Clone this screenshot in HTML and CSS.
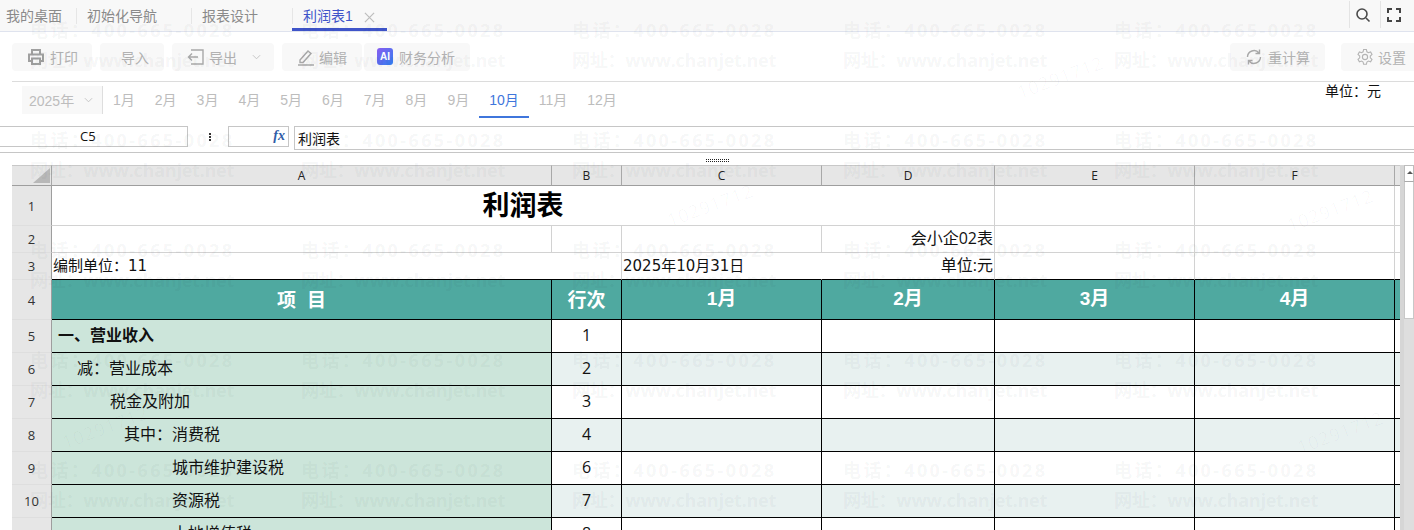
FILE: index.html
```html
<!DOCTYPE html>
<html lang="zh-CN">
<head>
<meta charset="utf-8">
<title>利润表</title>
<link rel="stylesheet" href="styles.css">
</head>
<body>
<div class="page">
  <header class="tabs">
    <span class="tab tab-home">我的桌面</span>
    <span class="tab tab-init">初始化导航</span>
    <span class="tab tab-design">报表设计</span>
    <span class="tab tab-active">利润表1<svg class="tab-x" viewBox="0 0 12 12"><path d="M1 1l10 10M11 1L1 11"/></svg></span>
    <div class="tab-tools">
      <span class="tool"><svg class="ic-top" viewBox="0 0 16 16"><circle cx="7" cy="7" r="5"/><path d="M11 11l3.500 3.500"/></svg></span>
      <span class="tool"><svg class="ic-top ic-full" viewBox="0 0 16 16"><path d="M6 2H2v4M10 2h4v4M6 14H2v-4M10 14h4v-4"/></svg></span>
    </div>
  </header>

  <div class="toolbar">
    <span class="btn btn-print"><svg class="ic ic-bold" viewBox="0 0 18 18"><path d="M5 6V2h8v4M5 13H2V6.500h14V13h-3M5 10.500h8V16H5z"/></svg>打印</span>
    <span class="btn btn-import">导入</span>
    <span class="btn btn-export"><svg class="ic" viewBox="0 0 18 18"><path d="M4 2h12v14H4M11 9H2M5 5.500L1.500 9 5 12.500"/></svg>导出<svg class="chev" viewBox="0 0 10 6"><path d="M1 1l4 4 4-4"/></svg></span>
    <span class="btn btn-edit"><svg class="ic" viewBox="0 0 18 18"><path d="M3 12L11 3l3 2.500-8 9H3zM1 17h16"/></svg>编辑</span>
    <span class="btn btn-ai"><span class="ai-badge">AI</span>财务分析</span>
    <span class="btn btn-recalc"><svg class="ic" viewBox="0 0 18 18"><path d="M2.500 9A6.500 6.500 0 0 1 14 5M15.500 9A6.500 6.500 0 0 1 4 13M14.500 1.500V5.500h-4M3.500 16.500V12.500h4"/></svg>重计算</span>
    <span class="btn btn-set"><svg class="ic ic-thin" viewBox="0 0 18 18"><circle cx="9" cy="9" r="2.600"/><path d="M7.600 1.500h2.800l.5 2.300 1.500.9 2.200-.7 1.400 2.400-1.700 1.600v1.800l1.700 1.600-1.400 2.400-2.200-.7-1.500.9-.5 2.300H7.600l-.5-2.300-1.500-.9-2.200.7-1.400-2.400 1.700-1.600V8L2 6.400l1.400-2.400 2.200.7 1.500-.9z"/></svg>设置</span>
  </div>

  <div class="months">
    <span class="year">2025年<svg class="chev" viewBox="0 0 10 6"><path d="M1 1l4 4 4-4"/></svg></span>
    <span class="month">1月</span>
    <span class="month">2月</span>
    <span class="month">3月</span>
    <span class="month">4月</span>
    <span class="month">5月</span>
    <span class="month">6月</span>
    <span class="month">7月</span>
    <span class="month">8月</span>
    <span class="month">9月</span>
    <span class="month month-on">10月</span>
    <span class="month">11月</span>
    <span class="month">12月</span>
    <span class="unit">单位：元</span>
  </div>

  <div class="formula">
    <span class="namebox">C5</span>
    <span class="kebab"><i></i><i></i><i></i></span>
    <span class="fxbox"><i class="fx">fx</i></span>
    <span class="finput">利润表</span>
  </div>

  <div class="splitter"><span class="dots"></span></div>

  <div class="sheet">
    <div class="grid-wrap">
      <table class="grid">
        <colgroup>
          <col class="c-h"><col class="c-a"><col class="c-b"><col class="c-c"><col class="c-d"><col class="c-e"><col class="c-f"><col class="c-g">
        </colgroup>
        <tr class="r-head">
          <th class="corner"><span class="tri"></span></th>
          <th>A</th><th>B</th><th>C</th><th>D</th><th>E</th><th>F</th><th></th>
        </tr>
        <tr class="r-title">
          <th class="rh">1</th>
          <td colspan="4" class="title">利润表</td><td></td><td></td><td></td>
        </tr>
        <tr class="r-meta">
          <th class="rh">2</th>
          <td></td><td></td><td></td><td class="right">会小企02表</td><td></td><td></td><td></td>
        </tr>
        <tr class="r-meta r-before">
          <th class="rh">3</th>
          <td colspan="2" class="org">编制单位：11</td><td class="date no-r">2025年10月31日</td><td class="right">单位:元</td><td></td><td></td><td></td>
        </tr>
        <tr class="r-cap">
          <th class="rh">4</th>
          <td><span class="cap-a">项</span><span>目</span></td><td>行次</td><td>1月</td><td>2月</td><td>3月</td><td>4月</td><td></td>
        </tr>
        <tr class="r-data">
          <th class="rh">5</th><td class="item strong">一、营业收入</td><td class="no">1</td><td></td><td></td><td></td><td></td><td></td>
        </tr>
        <tr class="r-data alt">
          <th class="rh">6</th><td class="item in-1">减：营业成本</td><td class="no">2</td><td></td><td></td><td></td><td></td><td></td>
        </tr>
        <tr class="r-data">
          <th class="rh">7</th><td class="item in-2">税金及附加</td><td class="no">3</td><td></td><td></td><td></td><td></td><td></td>
        </tr>
        <tr class="r-data alt">
          <th class="rh">8</th><td class="item in-3">其中：消费税</td><td class="no">4</td><td></td><td></td><td></td><td></td><td></td>
        </tr>
        <tr class="r-data">
          <th class="rh">9</th><td class="item in-4">城市维护建设税</td><td class="no">6</td><td></td><td></td><td></td><td></td><td></td>
        </tr>
        <tr class="r-data alt">
          <th class="rh">10</th><td class="item in-4">资源税</td><td class="no">7</td><td></td><td></td><td></td><td></td><td></td>
        </tr>
        <tr class="r-data">
          <th class="rh">11</th><td class="item in-4">土地增值税</td><td class="no">8</td><td></td><td></td><td></td><td></td><td></td>
        </tr>
      </table>
    </div>
    <div class="vscroll">
      <span class="v-up"></span>
      <span class="v-thumb"></span>
      <span class="v-track"></span>
    </div>
  </div>

  <div class="wm" aria-hidden="true">
    <div class="wm-cell"><span>电话：400-665-0028</span><span>网址：www.chanjet.net</span></div>
    <div class="wm-cell"><span>电话：400-665-0028</span><span>网址：www.chanjet.net</span></div>
    <div class="wm-cell"><span>电话：400-665-0028</span><span>网址：www.chanjet.net</span></div>
    <div class="wm-cell"><span>电话：400-665-0028</span><span>网址：www.chanjet.net</span></div>
    <div class="wm-cell"><span>电话：400-665-0028</span><span>网址：www.chanjet.net</span></div>
    <div class="wm-cell"><span>电话：400-665-0028</span><span>网址：www.chanjet.net</span></div>
    <div class="wm-cell"><span>电话：400-665-0028</span><span>网址：www.chanjet.net</span></div>
    <div class="wm-cell"><span>电话：400-665-0028</span><span>网址：www.chanjet.net</span></div>
    <div class="wm-cell"><span>电话：400-665-0028</span><span>网址：www.chanjet.net</span></div>
    <div class="wm-cell"><span>电话：400-665-0028</span><span>网址：www.chanjet.net</span></div>
    <div class="wm-cell"><span>电话：400-665-0028</span><span>网址：www.chanjet.net</span></div>
    <div class="wm-cell"><span>电话：400-665-0028</span><span>网址：www.chanjet.net</span></div>
    <div class="wm-cell"><span>电话：400-665-0028</span><span>网址：www.chanjet.net</span></div>
    <div class="wm-cell"><span>电话：400-665-0028</span><span>网址：www.chanjet.net</span></div>
    <div class="wm-cell"><span>电话：400-665-0028</span><span>网址：www.chanjet.net</span></div>
    <div class="wm-cell"><span>电话：400-665-0028</span><span>网址：www.chanjet.net</span></div>
    <div class="wm-cell"><span>电话：400-665-0028</span><span>网址：www.chanjet.net</span></div>
    <div class="wm-cell"><span>电话：400-665-0028</span><span>网址：www.chanjet.net</span></div>
    <div class="wm-cell"><span>电话：400-665-0028</span><span>网址：www.chanjet.net</span></div>
    <div class="wm-cell"><span>电话：400-665-0028</span><span>网址：www.chanjet.net</span></div>
    <div class="wm-cell"><span>电话：400-665-0028</span><span>网址：www.chanjet.net</span></div>
    <div class="wm-cell"><span>电话：400-665-0028</span><span>网址：www.chanjet.net</span></div>
    <div class="wm-cell"><span>电话：400-665-0028</span><span>网址：www.chanjet.net</span></div>
    <div class="wm-cell"><span>电话：400-665-0028</span><span>网址：www.chanjet.net</span></div>
    <div class="wm-cell"><span>电话：400-665-0028</span><span>网址：www.chanjet.net</span></div>
    <span class="stamp s1">10291712</span>
    <span class="stamp s2">10291712</span>
    <span class="stamp s3">10291712</span>
    <span class="stamp s4">10291712</span>
    <span class="stamp s5">10291712</span>
  </div>
</div>
</body>
</html>
```
FILE: styles.css
```css
* { box-sizing: border-box; }
html, body { margin: 0; padding: 0; }
body {
  width: 1414px;
  height: 530px;
  overflow: hidden;
  background: #fff;
  font-family: "Noto Sans CJK SC", "Liberation Sans", sans-serif;
  font-size: 14px;
}
.page { position: relative; width: 1414px; height: 530px; overflow: hidden; }

/* tab strip */
.tabs {
  display: flex;
  align-items: stretch;
  height: 32px;
  background: #f8f8f8;
  border-bottom: 1px solid #dfe3ee;
  color: #8a8a8a;
  line-height: 31px;
  font-family: "Liberation Sans", "Noto Sans CJK SC", sans-serif;
}
.tab { position: relative; display: block; height: 31px; line-height: 33px; white-space: nowrap; }
.tab::before {
  content: "";
  position: absolute;
  left: 0;
  top: 8px;
  height: 16px;
  border-left: 1px solid #e6e6e6;
}
.tab-home { width: 76px; padding-left: 6px; }
.tab-home::before { display: none; }
.tab-init { width: 115px; padding-left: 11px; }
.tab-design { width: 101px; padding-left: 11px; }
.tab-active {
  width: 95px;
  padding-left: 11px;
  color: #3f54c9;
  border-bottom: 3px solid #3f54c9;
  display: flex;
  line-height: 33px;
}
.tab-x { width: 11px; height: 11px; margin: 12px 0 0 11px; fill: none; stroke: #bdbdbd; stroke-width: 1.300; }
.tab-tools { display: flex; margin-left: auto; margin-right: 3px; }
.tool {
  width: 31px;
  height: 27px;
  border-left: 1px solid #e4e4e4;
  display: flex;
  align-items: center;
  justify-content: center;
  padding-right: 5px;
  margin-top: 1px;
}
.ic-top { width: 16px; height: 16px; fill: none; stroke: #4a4a4a; stroke-width: 1.600; }
.ic-full { stroke-width: 2; stroke: #444; }

/* tool buttons */
.toolbar {
  display: flex;
  align-items: center;
  height: 50px;
  margin-left: 12px;
  border-bottom: 1px solid #dcdcdc;
  color: #b2b2b2;
  font-family: "Liberation Sans", "Noto Sans CJK SC", sans-serif;
}
.btn {
  display: flex;
  align-items: center;
  height: 28px;
  background: #f8f8f8;
  border-radius: 4px;
  white-space: nowrap;
}
.ic { width: 18px; height: 18px; fill: none; stroke: #a8a8a8; stroke-width: 1.400; flex: none; }
.ic-bold { stroke-width: 2; stroke: #a0a0a0; }
.ic-thin { stroke-width: 1.100; stroke: #b4b4b4; }
.chev { width: 9px; height: 6px; fill: none; stroke: #c0c0c0; stroke-width: 1; flex: none; }
.btn-print { width: 80px; padding-left: 15px; gap: 5px; }
.btn-import { width: 64px; margin-left: 8px; padding-left: 21px; }
.btn-export { width: 102px; margin-left: 8px; padding-left: 15px; gap: 4px; }
.btn-export .chev { margin-left: 11px; }
.btn-edit { width: 80px; margin-left: 8px; padding-left: 15px; gap: 4px; }
.btn-ai { width: 106px; margin-left: 2px; padding-left: 13px; gap: 6px; }
.ai-badge {
  width: 16px;
  height: 17px;
  border-radius: 3px;
  background: linear-gradient(135deg, #8a5cf0, #2f7ff0);
  color: #fff;
  font-family: "Liberation Sans", sans-serif;
  font-weight: 700;
  font-size: 10px;
  line-height: 17px;
  text-align: center;
}
.btn-recalc { width: 95px; margin-left: auto; padding-left: 15px; gap: 5px; }
.btn-set { width: 73px; margin-left: 16px; padding-left: 15px; gap: 4px; border-radius: 4px 0 0 4px; }

/* month strip */
.months {
  position: relative;
  display: flex;
  align-items: flex-start;
  height: 44px;
  padding: 4px 0 0 22px;
  color: #bdbdbd;
  font-family: "Liberation Sans", "Noto Sans CJK SC", sans-serif;
}
.year {
  display: flex;
  align-items: center;
  gap: 10px;
  width: 81px;
  height: 28px;
  padding-left: 7px;
  background: #f8f8f8;
  border-right: 1px solid #dedede;
}
.month { height: 32px; line-height: 28px; padding: 0 10px; white-space: nowrap; }
.month-on { color: #3f76dc; border-bottom: 2px solid #3f76dc; }
.unit { margin: -5px 33px 0 auto; color: #111; line-height: 20px; }

/* formula bar */
.formula { display: flex; align-items: flex-start; height: 26px; }
.namebox {
  width: 188px;
  height: 21px;
  border: 1px solid #c6c6c6;
  border-left: 0;
  padding-left: 80px;
  font-size: 13px;
  line-height: 19px;
  color: #111;
  font-family: "Open Sans", sans-serif;
}
.kebab {
  width: 40px;
  height: 20px;
  padding: 7px 0 0 21px;
  display: flex;
  flex-direction: column;
  gap: 1px;
}
.kebab i { display: block; width: 2px; height: 2px; background: #333; }
.fxbox {
  width: 61px;
  height: 21px;
  border: 1px solid #c6c6c6;
  text-align: right;
  padding-right: 3px;
}
.fx { font-family: "Liberation Serif", serif; font-weight: 700; font-size: 14px; line-height: 18px; color: #2f5da8; display: block; }
.finput {
  flex: 1;
  margin-left: 5px;
  height: 24px;
  border: 1px solid #c6c6c6;
  border-right: 0;
  padding-left: 3px;
  line-height: 23px;
  color: #111;
}

/* split bar */
.splitter {
  height: 13px;
  border-top: 1px solid #c6c6c6;
  position: relative;
}
.dots {
  position: absolute;
  left: 706px;
  top: 6px;
  width: 23px;
  height: 3px;
  background:
    linear-gradient(90deg, #222 50%, transparent 50%) 0 0 / 2px 1px repeat-x,
    linear-gradient(90deg, #222 50%, transparent 50%) 0 2px / 2px 1px repeat-x;
}

/* sheet */
.sheet { display: flex; padding-left: 12px; height: 365px; overflow: hidden; }
.grid-wrap { width: 1388px; overflow: hidden; }
.grid {
  width: 1388px;
  table-layout: fixed;
  border-collapse: separate;
  border-spacing: 0;
  color: #111;
}
.c-h { width: 40px; }
.c-a { width: 500px; }
.c-b { width: 70px; }
.c-c { width: 200px; }
.c-d { width: 173px; }
.c-e { width: 200px; }
.c-f { width: 200px; }
.c-g { width: 5px; }
.grid td, .grid th {
  padding: 0;
  border-right: 1px solid #d2d2d2;
  border-bottom: 1px solid #d2d2d2;
  font-weight: 400;
  line-height: 20px;
  overflow: hidden;
  white-space: nowrap;
}
.grid td:last-child, .grid th:last-child { border-right: 0; }
.grid .r-head th {
  height: 21px;
  background: #e6e6e6;
  border-top: 1px solid #c8c8c8;
  border-bottom: 1px solid #9e9e9e;
  border-right: 1px solid #a8a8a8;
  font-family: "Open Sans", sans-serif;
  font-size: 12px;
  line-height: 19px;
  color: #222;
  text-align: center;
  vertical-align: middle;
}
.grid .r-head th:last-child { border-right: 0; }
.corner { position: relative; }
.tri {
  position: absolute;
  right: 1px;
  bottom: 2px;
  border-style: solid;
  border-width: 0 0 15px 17px;
  border-color: transparent transparent #b8b8b8 transparent;
}
.grid .rh {
  background: #e6e6e6;
  border-right: 1px solid #9e9e9e;
  border-bottom: 1px solid #dedede;
  font-family: "Open Sans", sans-serif;
  font-size: 13px;
  color: #333;
  text-align: center;
}
.r-title td, .r-title th { height: 40px; }
.r-meta td, .r-meta th { height: 27px; }
.grid td.title {
  text-align: center;
  font-size: 27px;
  font-weight: 700;
  line-height: 34px;
  color: #000;
  padding-bottom: 4px;
  overflow: visible;
}
.grid td.right {
  text-align: right;
  padding: 0 1px 2px 0;
  font-size: 16px;
  font-family: "Open Sans", "Noto Sans CJK SC", sans-serif;
}
.grid td.org, .grid td.date {
  font-size: 15px;
  padding: 0 0 0 1px;
  font-family: "DejaVu Sans", "Noto Sans CJK SC", sans-serif;
}
.grid td.no-r { border-right-color: transparent; }
.grid .r-before td { border-bottom-color: #000; }
.r-cap td {
  height: 40px;
  background: #4fa9a0;
  color: #fff;
  text-align: center;
}
.grid .r-cap td {
  font-size: 19px;
  font-weight: 700;
  border-right-color: #000;
  border-bottom-color: #000;
  padding-bottom: 2px;
}
.cap-a { margin-right: 11px; }
.r-cap td:nth-child(2), .r-cap td:nth-child(3) { font-family: "Noto Sans CJK SC", sans-serif; }
.r-cap td:nth-child(n+4) { font-family: "Liberation Sans", "Noto Sans CJK SC", sans-serif; }
.grid .r-data td {
  height: 33px;
  background: #fff;
  font-size: 16px;
  border-right-color: #000;
  border-bottom-color: #000;
}
.grid .r-data.alt td { background: #e8f1f0; }
.r-data th { height: 33px; }
.grid .r-data td.item { background: #cce5da; padding: 0 0 4px 6px; }
.grid .r-data td.strong { font-weight: 700; }
.grid .r-data td.in-1 { padding-left: 25px; }
.grid .r-data td.in-2 { padding-left: 58px; }
.grid .r-data td.in-3 { padding-left: 72px; }
.grid .r-data td.in-4 { padding-left: 120px; }
.grid .r-data td.no { text-align: center; font-family: "Open Sans", sans-serif; padding-bottom: 3px; }

/* scrollbar */
.vscroll {
  width: 14px;
  height: 365px;
  border-left: 4px solid #d6d6d6;
  display: flex;
  flex-direction: column;
  background: #fff;
}
.v-up {
  height: 17px;
  border: 1px solid #bdbdbd;
  border-bottom: 1px solid #aaa;
  position: relative;
}
.v-up::after {
  content: "";
  position: absolute;
  left: 2px;
  top: 5px;
  border-style: solid;
  border-width: 0 3px 3px 3px;
  border-color: transparent transparent #555 transparent;
}
.v-thumb { height: 137px; border: 1px solid #c8c8c8; border-top: 0; background: #fff; }
.v-track { flex: 1; background: #dedede; }

/* watermark */
.wm {
  position: absolute;
  left: 30px;
  top: 15px;
  display: grid;
  grid-template-columns: repeat(5, 271px);
  grid-auto-rows: 110px;
  pointer-events: none;
}
.wm-cell {
  display: flex;
  flex-direction: column;
  color: rgba(30, 40, 50, 0.05);
  font-family: "Open Sans", "Noto Sans CJK SC", sans-serif;
  font-size: 18px;
  font-weight: 700;
  white-space: nowrap;
}
.wm-cell span { display: block; height: 30px; line-height: 30px; letter-spacing: 2.400px; }
.wm-cell span + span { letter-spacing: -0.250px; }
.stamp {
  position: absolute;
  color: rgba(30, 40, 50, 0.03);
  font-family: "Open Sans", sans-serif;
  font-size: 18px;
  transform: rotate(-20deg);
  letter-spacing: 1px;
}
.s1 { left: 635px; top: 178px; }
.s2 { left: 985px; top: 50px; }
.s3 { left: 1255px; top: 183px; }
.s4 { left: 1265px; top: 405px; }
.s5 { left: 30px; top: 400px; }
```
